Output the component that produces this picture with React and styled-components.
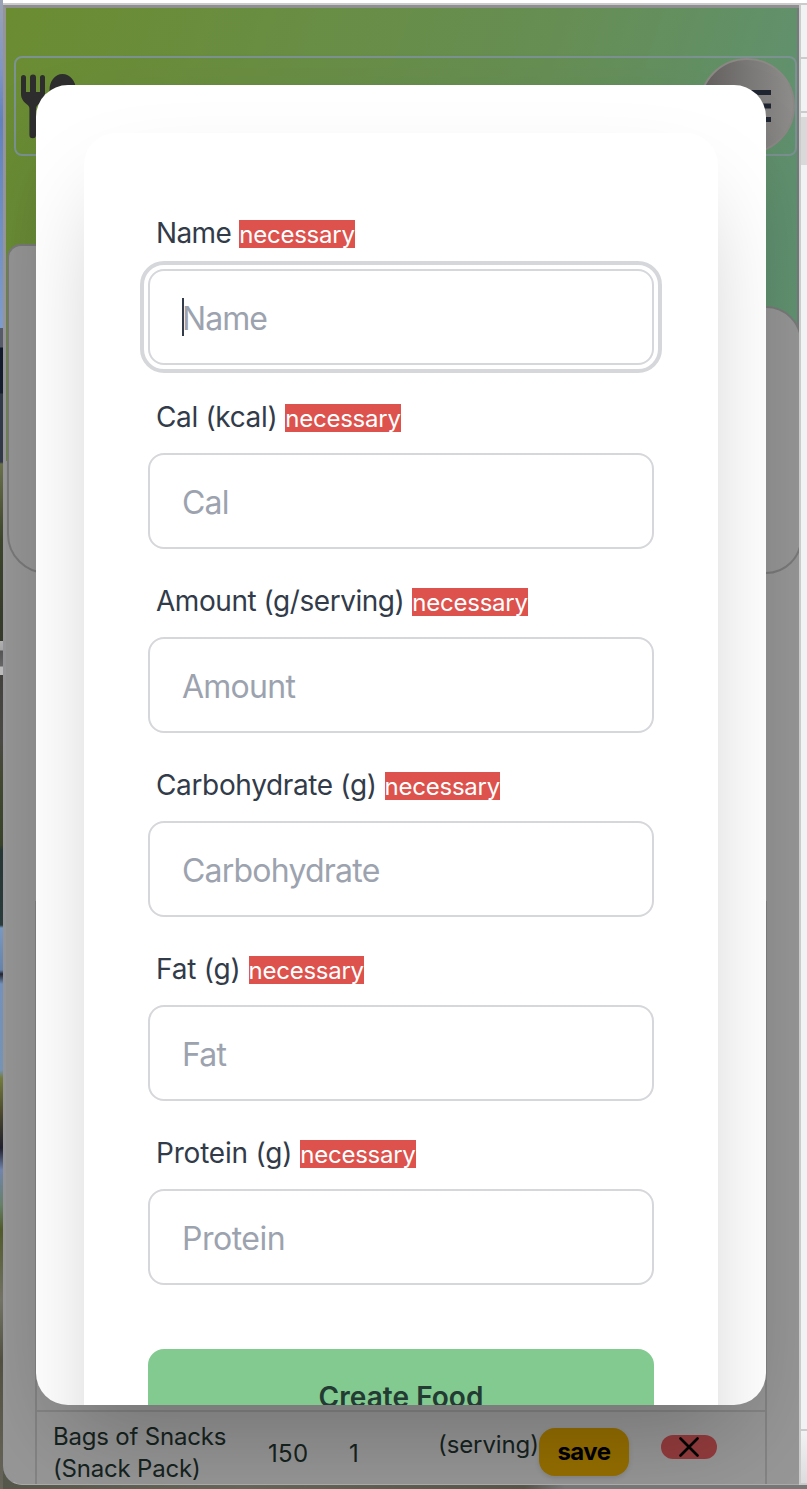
import React from 'react';
import styled, { createGlobalStyle, css } from 'styled-components';

const Global = createGlobalStyle`
  * { box-sizing: border-box; }
  body { margin: 0; overflow: hidden; font-family: Inter, "Liberation Sans", sans-serif; }
`;

const Desktop = styled.div`
  width: 807px;
  height: 1489px;
  display: flex;
  overflow: hidden;
  background: linear-gradient(90deg, #55574a, #66655a 30%, #56554a 65%, #777 70%);
`;

const Wallpaper = styled.div`
  width: 3px;
  flex: none;
  background: linear-gradient(#9aa3b5 0, #7f95c4 70px, #6182bd 120px, #7c9ccd 328px,
    #555b68 328px, #555b68 347px, #101a2c 348px, #141d2d 393px, #303948 394px, #313947 462px,
    #69704b 464px, #3c442a 540px, #34392a 641px, #b0b0b0 641px, #a5a5a5 650px, #555 651px,
    #666 666px, #bbb 667px, #bbb 675px, #42413d 675px, #4b4944 740px, #41482f 780px,
    #374229 845px, #263634 850px, #293b3b 925px, #7899c2 928px, #6683ab 970px, #202330 974px,
    #7391bb 984px, #7593b5 1070px, #737c3c 1078px, #48462d 1115px, #20202d 1148px,
    #7185ae 1170px, #668068 1205px, #4f5929 1230px, #737365 1300px, #515040 1360px, #67655a);
`;

const Browser = styled.div`
  width: 804px;
  display: flex;
  flex-direction: column;
`;

const TopEdge = styled.div`
  height: 5px;
  flex: none;
  background: #fff;
  border-bottom: 2px solid #cbcbcc;
`;

const Panes = styled.div`
  height: 1480px;
  flex: none;
  display: flex;
`;

const Page = styled.main`
  position: relative;
  width: 796px;
  height: 1480px;
  overflow: hidden;
  background: #979797;
  border: solid #8f8f92;
  border-width: 3px 0 1px 3px;
  border-left-color: #959597;
  border-bottom-color: #aaa;
  border-bottom-left-radius: 19px;
`;

const Hero = styled.section`
  height: 453px;
  padding-top: 48px;
  border-right: 2px solid #777a7c;
  background: linear-gradient(108deg, #6b8c31 0%, #698d41 28%, #668e54 60%, #609170 90%, #629570 100%);
`;

const Header = styled.header`
  width: 783px;
  height: 100px;
  margin-left: 8px;
  padding: 0 0 0 4px;
  display: flex;
  justify-content: space-between;
  align-items: center;
  border: 2px solid #7b9290;
  border-radius: 8px;
`;

const MenuButton = styled.button`
  width: 96px;
  height: 96px;
  flex: none;
  padding: 0 0 0 2px;
  display: flex;
  align-items: center;
  justify-content: center;
  border: 2px solid #8b8885;
  border-radius: 50%;
  background: linear-gradient(90deg, #625f5d, #7c7a79 55%, #8f8d8c);
`;

const Tab = styled.div`
  position: relative;
  width: 180px;
  height: 64px;
  margin: 88px 0 -2px 1px;
  background: #969696;
  border: 2px solid #7a7a7a;
  border-bottom: 0;
  border-radius: 14px 0 0 0;
`;

const Panel = styled.div`
  width: 795px;
  height: 268px;
  margin-left: 1px;
  background: #969696;
  border: 2px solid #7a7a7a;
  border-radius: 0 36px 36px 40px;
`;

const FoodTable = styled.section`
  width: 732px;
  height: 583px;
  margin: 440px 0 0 29px;
  border: solid #848484;
  border-width: 0 2px;
  display: flex;
  flex-direction: column;
  justify-content: flex-end;
`;

const FoodRow = styled.div`
  height: 74px;
  flex: none;
  display: flex;
  align-items: flex-start;
  background: #979797;
  border-top: 2px solid #868686;
  color: #16231f;
  font-size: 24px;
  line-height: 32px;
  white-space: nowrap;
`;

const Cell = styled.div`
  width: ${(p) => p.$w}px;
  flex: none;
  padding-top: ${(p) => p.$top}px;
  padding-left: ${(p) => p.$left || 0}px;
  letter-spacing: ${(p) => p.$track || 0}px;
`;

const SaveButton = styled.button`
  width: 90px;
  height: 48px;
  margin-top: 16px;
  padding: 0;
  border: 0;
  border-radius: 16px;
  background: #966f00;
  color: #000;
  font: 700 24px/48px Inter, sans-serif;
  letter-spacing: -0.5px;
  box-shadow: 0 2px 5px rgba(0, 0, 0, 0.12);
`;

const DeleteButton = styled.button`
  width: 56px;
  height: 24px;
  margin: 23px 0 0 32px;
  padding: 0;
  display: flex;
  align-items: center;
  justify-content: center;
  border: 0;
  border-radius: 12px;
  background: #953c3e;
`;

const Modal = styled.div`
  position: absolute;
  left: 30px;
  top: 77px;
  width: 730px;
  height: 1320px;
  padding: 48px;
  overflow: hidden;
  border-radius: 32px;
  background: #fff;
  box-shadow: 0 50px 100px -24px rgba(0, 0, 0, 0.25);
`;

const FormCard = styled.form`
  height: 1500px;
  padding: 64px;
  border-radius: 32px;
  background: #fff;
  box-shadow: 0 50px 100px -24px rgba(0, 0, 0, 0.25);
`;

const Field = styled.div`
  height: 184px;
`;

const Label = styled.label`
  display: flex;
  align-items: baseline;
  height: 72px;
  padding: 16px 8px;
  gap: 8px;
  color: #323b49;
  font-size: 28px;
  line-height: 40px;
  letter-spacing: ${(p) => p.$track}px;
  white-space: nowrap;
`;

const Required = styled.span`
  height: 28px;
  background: #dd524c;
  color: #fff;
  font-size: 24px;
  line-height: 29px;
  letter-spacing: -0.25px;
`;

const InputWrap = styled.div`
  position: relative;
`;

const Input = styled.input`
  display: block;
  width: 506px;
  height: 96px;
  padding: 2px 32px 0;
  border: 2px solid #d6d7db;
  border-radius: 16px;
  background: #fff;
  font: 400 32px Inter, sans-serif;
  letter-spacing: ${(p) => p.$track}px;
  outline: none;
  &::placeholder { color: #9ca3af; opacity: 1; }
  ${(p) => p.$active && css`
    outline: 4px solid #d6d7db;
    outline-offset: 4px;
  `}
`;

const Caret = styled.span`
  position: absolute;
  left: 34px;
  top: 29px;
  width: 2px;
  height: 38px;
  background: #323b49;
`;

const Submit = styled.button`
  display: block;
  width: 506px;
  height: 96px;
  margin-top: 48px;
  padding: 0;
  border: 0;
  border-radius: 16px;
  background: #82ca90;
  color: #233b32;
  font: 600 28px/96px Inter, sans-serif;
  letter-spacing: 0.05px;
`;

const SidePane = styled.aside`
  width: 8px;
  border-left: 2px solid #cbcbcc;
  background: #f1f2f4;
`;

const SideBlock = styled.div`
  height: ${(p) => p.$h}px;
  background: ${(p) => p.$bg || 'transparent'};
  border-bottom: ${(p) => (p.$line ? '2px solid #cbcbcc' : '0')};
`;

const Utensils = () => (
  <svg width="60" height="66" viewBox="0 -1 60 66" fill="#2e2e2e">
    <path d="M1 3.5a2.500 2.500 0 0 1 5 0V18h4V3.500a3 3 0 0 1 6 0V18h4V3.500a2.500 2.500 0 0 1 5 0V20c0 5-3 8-6.500 10.500-1.500 1-2.500 2-2.500 4V61a3.300 3.300 0 0 1-6.600 0V34.500c0-2-1-3-2.400-4C4 28 1 25 1 20z" />
    <path d="M42.500 0C50 0 56 7 56 16c0 8-4 14-10 17v28a3.300 3.300 0 0 1-6.600 0V33C33 30 29.500 24 29.500 16c0-9 5.500-16 13-16z" />
  </svg>
);

const fields = [
  { name: 'Name', label: 'Name', track: -0.6, ph: -0.95 },
  { name: 'Cal', label: 'Cal (kcal)', track: -0.35, ph: -0.8 },
  { name: 'Amount', label: 'Amount (g/serving)', track: -0.45, ph: -0.75 },
  { name: 'Carbohydrate', label: 'Carbohydrate (g)', track: -0.35, ph: -0.78 },
  { name: 'Fat', label: 'Fat (g)', track: -0.2, ph: -0.75 },
  { name: 'Protein', label: 'Protein (g)', track: -0.2, ph: -0.5 },
];

export default function App() {
  return (
    <Desktop>
      <Global />
      <Wallpaper />
      <Browser>
        <TopEdge />
        <Panes>
          <Page>
            <Hero>
              <Header>
                <Utensils />
                <MenuButton aria-label="Menu">
                  <svg width="46" height="32" viewBox="0 0 46 32" fill="#1f2531">
                    <path d="M0 0h46v5H0zM0 13.500h46v5H0zM0 27h46v5H0z" />
                  </svg>
                </MenuButton>
              </Header>
              <Tab />
              <Panel />
            </Hero>
            <FoodTable>
              <FoodRow>
                <Cell $w={231} $top={9} $left={16} $track={-0.2}>Bags of Snacks<br />(Snack Pack)</Cell>
                <Cell $w={81} $top={26} $track={0.3}>150</Cell>
                <Cell $w={89} $top={26}>1</Cell>
                <Cell $w={101} $top={17} $track={-0.1}>(serving)</Cell>
                <SaveButton>save</SaveButton>
                <DeleteButton aria-label="Delete">
                  <svg width="20" height="20" viewBox="0 0 20 20" fill="none" stroke="#000" strokeWidth="2.600" strokeLinecap="round">
                    <path d="M1.500 1.500l17 17M18.500 1.500l-17 17" />
                  </svg>
                </DeleteButton>
              </FoodRow>
            </FoodTable>
            <Modal>
              <FormCard>
                {fields.map((f, i) => (
                  <Field key={f.name}>
                    <Label htmlFor={f.name} $track={f.track}>
                      {f.label}
                      <Required>necessary</Required>
                    </Label>
                    <InputWrap>
                      <Input id={f.name} placeholder={f.name} $active={i === 0} $track={f.ph} />
                      {i === 0 && <Caret />}
                    </InputWrap>
                  </Field>
                ))}
                <Submit type="button">Create Food</Submit>
              </FormCard>
            </Modal>
          </Page>
          <SidePane>
            <SideBlock $h={54} $line />
            <SideBlock $h={54} $line />
            <SideBlock $h={4} />
            <SideBlock $h={48} $bg="#d9d9d9" />
            <SideBlock $h={1266} $line />
            <SideBlock $h={54} $line $bg="linear-gradient(#f1f2f4, #dcdcde)" />
          </SidePane>
        </Panes>
      </Browser>
    </Desktop>
  );
}
